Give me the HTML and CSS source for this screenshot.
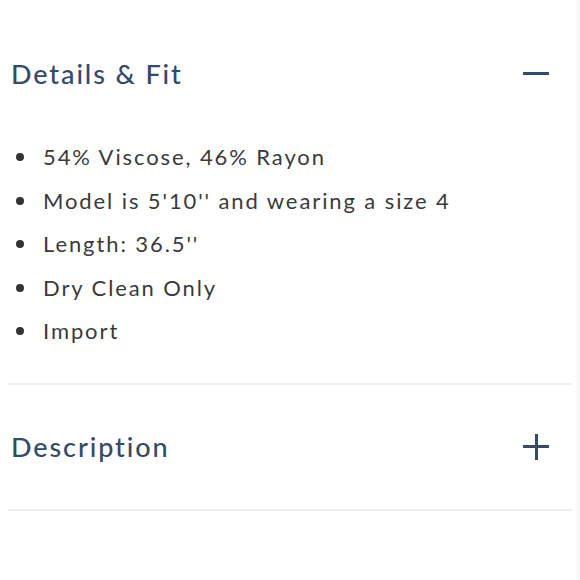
FILE: index.html
```html
<!DOCTYPE html>
<html>
<head>
<meta charset="utf-8">
<link rel="stylesheet" href="styles.css">
</head>
<body>
<div class="accordion">
  <section class="panel panel-open">
    <div class="panel-head head-first">
      <h2 class="panel-title">Details &amp; Fit</h2>
      <span class="icon icon-minus"></span>
    </div>
    <ul class="details">
      <li>54% Viscose, 46% Rayon</li>
      <li>Model is 5'10'' and wearing a size 4</li>
      <li>Length: 36.5''</li>
      <li>Dry Clean Only</li>
      <li>Import</li>
    </ul>
  </section>
  <section class="panel">
    <div class="panel-head">
      <h2 class="panel-title">Description</h2>
      <span class="icon icon-plus"></span>
    </div>
  </section>
</div>
</body>
</html>
```

FILE: styles.css
```css
html, body {
  margin: 0;
  padding: 0;
  background: linear-gradient(to right, #ffffff calc(100% - 5px), #f4f4f4);
  height: 100%;
}
body {
  font-family: "Lato", "Open Sans", sans-serif;
}
.accordion {
  padding: 0 8px;
}
.panel {
  border-bottom: 2px solid #efefef;
}
.panel-head {
  height: 124px;
  display: flex;
  align-items: center;
  justify-content: space-between;
  padding: 0 23px 0 3px;
}
.head-first {
  margin-top: 11px;
}
.panel-title {
  margin: 0;
  font-size: 27px;
  font-weight: 500;
  color: #344a6a;
  letter-spacing: 1.9px;
}
.icon {
  position: relative;
  width: 26px;
  height: 26px;
  display: block;
}
.icon::before, .icon::after {
  content: "";
  position: absolute;
  background: #344a6a;
}
.icon::before {
  left: 0;
  right: 0;
  top: 11.5px;
  height: 3px;
}
.icon-plus::after {
  top: 0;
  bottom: 0;
  left: 11.5px;
  width: 3px;
}
.details {
  list-style: none;
  margin: 0;
  padding: 0 0 30px 0;
}
.details li {
  position: relative;
  height: 43.5px;
  line-height: 43.5px;
  padding-left: 35px;
  font-size: 22px;
  color: #3a3a3a;
  letter-spacing: 1.9px;
}
.details li::before {
  content: "";
  position: absolute;
  left: 8px;
  top: 18px;
  width: 8px;
  height: 8px;
  border-radius: 50%;
  background: #333;
}
```
